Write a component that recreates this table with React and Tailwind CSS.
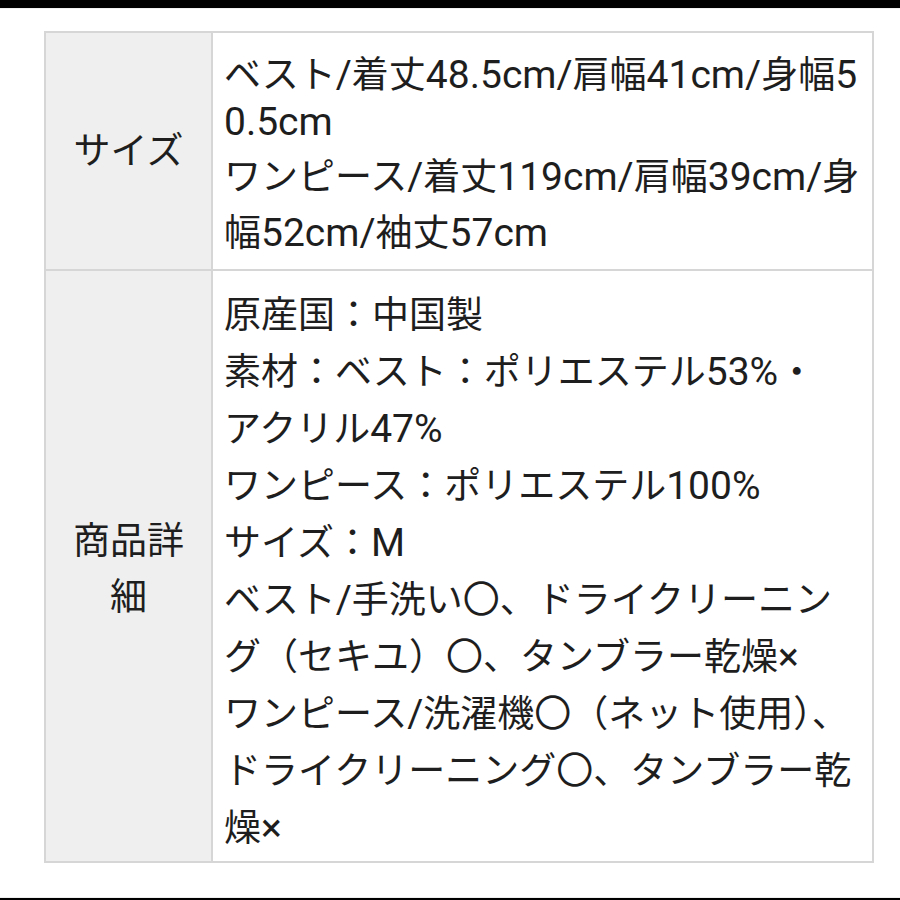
import React from "react";

const row1 = [
  { t: "ベスト/着丈48.5cm/肩幅41cm/身幅5", c: "" },
  { t: "0.5cm", c: "mt-[-10px]" },
  { t: "ワンピース/着丈119cm/肩幅39cm/身", c: "mt-[-2px]" },
  { t: "幅52cm/袖丈57cm", c: "mt-[-1px]" },
];

const row2 = [
  "原産国：中国製",
  "素材：ベスト：ポリエステル53%・",
  "アクリル47%",
  "ワンピース：ポリエステル100%",
  "サイズ：M",
  "ベスト/手洗い〇、ドライクリーニン",
  "グ（セキユ）〇、タンブラー乾燥×",
  "ワンピース/洗濯機〇（ネット使用）、",
  "ドライクリーニング〇、タンブラー乾",
  "燥×",
];

function Mixed({ text }) {
  const parts = text.split(/([\x20-\x7E×]+)/).filter((p) => p.length > 0);
  return (
    <>
      {parts.map((p, i) =>
        /^[\x20-\x7E×]+$/.test(p) ? (
          <span key={i} className="text-[39px] leading-none">
            {p}
          </span>
        ) : (
          <span key={i}>{p}</span>
        )
      )}
    </>
  );
}

export default function App() {
  return (
    <div className="w-[900px] h-[900px] bg-white flex flex-col overflow-hidden text-[#1e1e1e] font-[family-name:Roboto,'Noto_Sans_CJK_JP',sans-serif]">
      <div className="h-[8px] bg-black shrink-0" />
      <div className="h-[1px] bg-[#f0f0f0] shrink-0" />
      <div className="mt-[22px] ml-[44px] w-[830px] border-2 border-[#d6d6d6] flex flex-col text-[37px]">
        <div className="flex">
          <div className="w-[167px] shrink-0 bg-[#efefef] border-r-2 border-[#d6d6d6] flex items-center justify-center leading-[57px]">
            サイズ
          </div>
          <div className="flex-1 pl-[11px] pt-[14px] pb-[7px]">
            {row1.map((l, i) => (
              <div key={i} className={"h-[57px] leading-[57px] whitespace-nowrap " + l.c}>
                <Mixed text={l.t} />
              </div>
            ))}
          </div>
        </div>
        <div className="flex border-t-2 border-[#d6d6d6]">
          <div className="w-[167px] shrink-0 bg-[#efefef] border-r-2 border-[#d6d6d6] flex flex-col items-center justify-center leading-[56px] pt-[8px]">
            <div>商品詳</div>
            <div>細</div>
          </div>
          <div className="flex-1 pl-[11px] pt-[16px] pb-[4px]">
            {row2.map((l, i) => (
              <div key={i} className="h-[57px] leading-[57px] whitespace-nowrap">
                <Mixed text={l} />
              </div>
            ))}
          </div>
        </div>
      </div>
      <div className="mt-auto h-[1px] bg-[#eeeeee] shrink-0" />
      <div className="h-[2px] bg-black shrink-0" />
    </div>
  );
}
